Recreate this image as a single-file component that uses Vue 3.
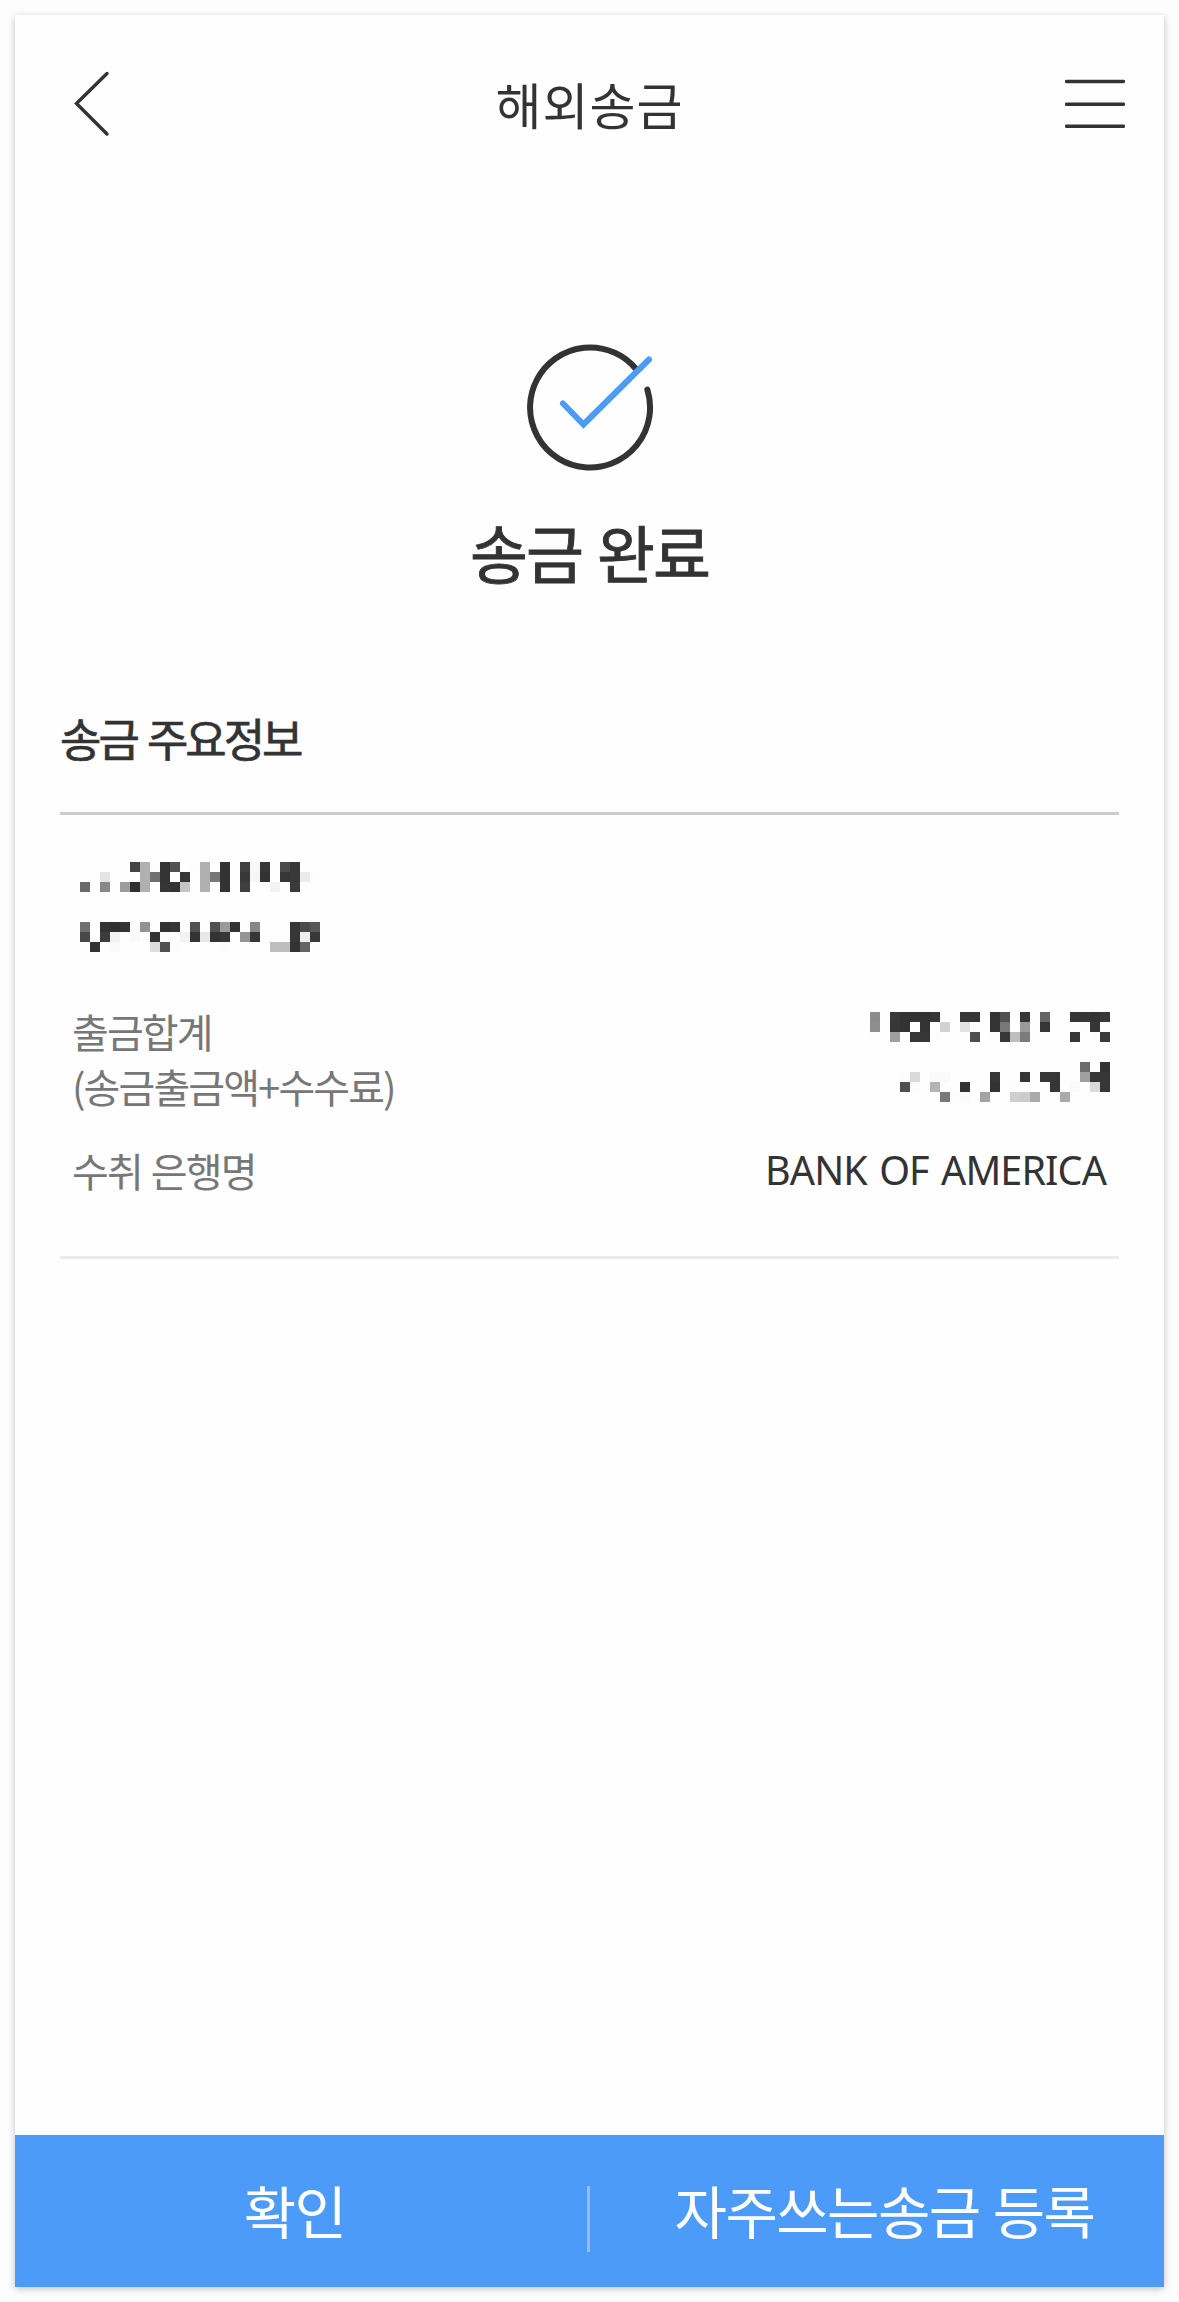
<script setup>

import { computed } from 'vue';

// each cell is a grey level in hex, ".." is an empty cell
const senderRows = [
  '.. .. .. .. .. 44 b0 fd 33 50 .. fd b0 .. 33 .. 3f f8 36 .. 4a 38 .. ..',
  '.. .. e4 .. .. .. b0 70 33 .. 36 .. b0 77 33 .. 38 f6 33 .. 36 38 eb fd',
  '6a .. 88 .. 9c 30 b0 .. 36 33 c4 .. b0 .. 33 .. 40 .. .. f3 .. 3a .. ..',
  '',
  '',
  '',
  '70 .. 33 30 33 fa 92 .. 33 36 .. 50 .. 50 9a 33 .. 86 .. .. .. 36 4a 58',
  '48 .. 3c f2 .. fa .. 33 .. .. f2 33 e8 33 36 .. 95 36 .. .. .. 36 ee 38',
  '.. 33 .. fa .. .. .. dd 50 fd .. .. .. .. fd .. .. .. .. be be 33 64 ..',
];

const amountRows = [
  '8c .. 38 33 33 33 36 .. .. 36 36 .. 33 50 .. 36 .. 64 .. .. 36 36 33 38',
  '8e .. 36 33 .. 33 fd d2 .. e2 .. .. 33 78 .. 9a .. 36 .. .. .. fd 36 ..',
  'fd .. a0 .. 36 36 fd .. .. .. 4e .. fd 38 be 7c .. .. .. .. 36 .. fd 3a',
  '',
  '',
  '.. .. .. .. .. .. .. .. .. .. .. .. .. .. .. .. .. .. .. .. .. 6c .. 33',
  '.. .. .. fd da .. fa fa .. .. .. .. 36 .. .. 36 .. 36 36 .. .. a0 36 36',
  '.. .. .. 50 fc .. b4 .. .. 33 .. .. 33 .. fd fd .. .. 36 .. fa .. da 36',
  '.. .. .. .. .. .. .. 78 fd fb .. a4 .. .. cf cc aa .. .. aa .. .. .. ..',
];

const toCells = (rows) => rows.flatMap((row, y) => row.split(' ')
  .map((tone, x) => ({ x, y, tone }))
  .filter((cell) => cell.tone && cell.tone !== '..'));

const senderCells = computed(() => toCells(senderRows));
const amountCells = computed(() => toCells(amountRows));

</script>

<template>
  <div class="screen">
    <header class="header">
      <svg class="icon-back" width="36" height="66" viewBox="0 0 36 66">
        <path d="M33 2.5 2.5 32.5 33 63" />
      </svg>
      <h1 class="header-title">해외송금</h1>
      <svg class="icon-menu" width="60" height="50" viewBox="0 0 60 50">
        <path d="M1.5 2.5h57M1.5 25.3h57M1.5 47.2h57" />
      </svg>
    </header>

    <main class="content">
      <section class="result">
        <svg class="icon-done" width="128" height="128" viewBox="0 0 128 128">
          <path class="ring" d="M110.5 25.5A60 60 0 1 0 121.3 45.5" />
          <path class="check" d="M37 59.5 57.5 80.5 123 15.5" />
        </svg>
        <h2 class="result-title">송금 완료</h2>
      </section>

      <h3 class="section-title">송금 주요정보</h3>

      <div class="info">
        <svg class="masked" width="240" height="90" viewBox="0 0 24 9">
          <rect
            v-for="cell in senderCells"
            :key="`${cell.x}-${cell.y}`"
            :x="cell.x"
            :y="cell.y"
            width="1"
            height="1"
            :fill="`#${cell.tone.repeat(3)}`"
          />
        </svg>

        <div class="row row-amount">
          <span class="label">출금합계<br>(송금출금액+수수료)</span>
          <svg class="masked" width="240" height="90" viewBox="0 0 24 9">
            <rect
              v-for="cell in amountCells"
              :key="`${cell.x}-${cell.y}`"
              :x="cell.x"
              :y="cell.y"
              width="1"
              height="1"
              :fill="`#${cell.tone.repeat(3)}`"
            />
          </svg>
        </div>

        <div class="row row-bank">
          <span class="label">수취 은행명</span>
          <span class="value">BANK OF AMERICA</span>
        </div>
      </div>
    </main>

    <footer class="footer">
      <button class="footer-btn confirm">확인</button>
      <span class="footer-divider"></span>
      <button class="footer-btn register">자주쓰는송금 등록</button>
    </footer>
  </div>
</template>

<style>
  body {
    margin: 0;
    background: #fdfdfd;
  }
</style>

<style scoped>

  .screen {
    display: flex;
    flex-direction: column;
    box-sizing: border-box;
    width: 1149px;
    height: 2272px;
    margin: 15px;
    background: #fefefe;
    box-shadow: 0 2px 7px rgba(0, 0, 0, 0.24);
    color: #333;
    font-family: "Noto Sans CJK KR", sans-serif;
  }

  h1,
  h2,
  h3 {
    margin: 0;
    white-space: nowrap;
  }

  svg {
    display: block;
    flex: none;
  }

  .header {
    display: flex;
    align-items: flex-start;
    justify-content: space-between;
    height: 140px;
    padding: 0 39px 0 59px;
  }

  .icon-back,
  .icon-menu {
    fill: none;
    stroke: #333;
    stroke-width: 3.4;
    stroke-linecap: round;
  }

  .icon-back {
    margin-top: 56px;
  }

  .icon-menu {
    margin-top: 64px;
  }

  .header-title {
    margin-top: 51px;
    padding-left: 4px;
    font-size: 50px;
    line-height: 74px;
    font-weight: 400;
    letter-spacing: 1px;
  }

  .content {
    flex: 1;
    padding: 0 45px;
  }

  .result {
    display: flex;
    flex-direction: column;
    align-items: center;
    padding-top: 189px;
  }

  .icon-done {
    fill: none;
    stroke-width: 6;
    stroke-linecap: round;
  }

  .ring {
    stroke: #333;
  }

  .check {
    stroke: #4d9bf8;
  }

  .result-title {
    margin-top: 34px;
    font-size: 63px;
    line-height: 90px;
    font-weight: 400;
    letter-spacing: -2px;
    word-spacing: 3px;
    -webkit-text-stroke: 0.9px #333;
  }

  .section-title {
    margin-top: 109px;
    padding-bottom: 41px;
    border-bottom: 3px solid #ccc;
    font-size: 45px;
    line-height: 66px;
    font-weight: 400;
    letter-spacing: -3px;
    word-spacing: 3px;
    -webkit-text-stroke: 0.7px #333;
  }

  .info {
    height: 394px;
    padding: 47px 9px 0 12px;
    border-bottom: 3px solid #ebebeb;
  }

  .masked {
    shape-rendering: crispEdges;
  }

  .info > .masked {
    margin-left: 8px;
  }

  .row {
    display: flex;
    align-items: flex-start;
    justify-content: space-between;
  }

  .row-amount {
    margin-top: 52px;
  }

  .row-amount .masked {
    margin-top: 8px;
  }

  .row-bank {
    margin-top: 29px;
    padding-right: 4px;
  }

  .label {
    color: #777;
    font-size: 40px;
    line-height: 55px;
    font-weight: 400;
    letter-spacing: -1.9px;
    word-spacing: 2px;
    white-space: nowrap;
  }

  .value {
    font-family: "Noto Sans", sans-serif;
    font-size: 39.5px;
    line-height: 55px;
    letter-spacing: -0.9px;
    word-spacing: 3px;
    white-space: nowrap;
  }

  .footer {
    display: flex;
    align-items: center;
    height: 152px;
    background: #4d9bf8;
  }

  .footer-btn {
    flex: 1 1 0;
    padding: 0 0 5px;
    border: 0;
    background: none;
    color: #fff;
    font-family: inherit;
    font-size: 57px;
    line-height: 82px;
    letter-spacing: -1.6px;
    word-spacing: 2px;
    white-space: nowrap;
  }

  .confirm {
    padding-right: 14px;
  }

  .register {
    padding-left: 14px;
  }

  .footer-divider {
    width: 3px;
    height: 66px;
    margin: 15px 1px 0 -1px;
    background: #8fc1fb;
  }

</style>
